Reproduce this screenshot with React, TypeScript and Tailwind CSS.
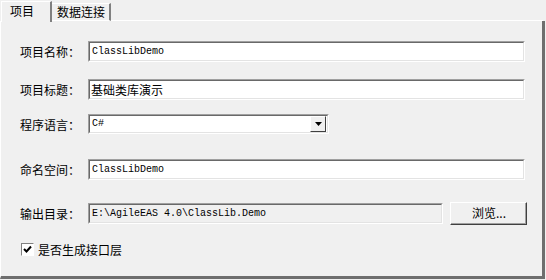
function Sunken({ className = "", children }: { className?: string; children?: React.ReactNode }) {
  return (
    <div className={`border border-t-[#a0a0a0] border-l-[#a0a0a0] border-r-white border-b-white ${className}`}>
      <div className="h-full w-full border border-t-[#696969] border-l-[#696969] border-r-[#e3e3e3] border-b-[#e3e3e3] flex items-center">
        {children}
      </div>
    </div>
  );
}

function Row({ label, className = "", children }: { label: string; className?: string; children: React.ReactNode }) {
  return (
    <div className={`flex items-center ${className}`}>
      <div className="w-[87px] pl-[19px] shrink-0 pt-[1px] whitespace-nowrap">{label}</div>
      {children}
    </div>
  );
}

function App() {
  const mono = "font-['Liberation_Mono','Noto_Sans_CJK_SC',monospace] text-[10px]";
  return (
    <div className="w-[546px] h-[280px] bg-[#f0f0f0] text-black text-[12px] leading-none font-['Noto_Sans_CJK_SC',sans-serif] flex flex-col">
      {/* tabs */}
      <div className="h-[21px] flex items-end relative">
        <div className="ml-[1px] h-[21px] w-[51px] border-t border-l border-white border-r-2 border-r-[#808080] bg-[#f0f0f0] flex items-start pl-[8px] pt-[3px] text-[12px] z-10 -mb-[1px]">
          项目
        </div>
        <div className="h-[18px] w-[59px] border-t border-white border-r-2 border-r-[#808080] border-b border-b-white flex items-start pl-[5px] pt-[2px]">
          数据连接
        </div>
        <div className="flex-1 h-[1px] bg-white mr-[3px]" />
      </div>
      {/* panel */}
      <div className="flex-1 border-l border-l-white border-r-[3px] border-r-[#6e6e6e] border-b-[3px] border-b-[#6e6e6e] mb-[1px] mr-[1px] flex flex-col">
        <Row label="项目名称：" className="mt-[20px]">
          <Sunken className="w-[437px] h-[21px] bg-white">
            <span className={`pl-[2px] ${mono}`}>ClassLibDemo</span>
          </Sunken>
        </Row>
        <Row label="项目标题：" className="mt-[17px]">
          <Sunken className="w-[437px] h-[21px] bg-white">
            <span className="pl-[1px] text-[12px]">基础类库演示</span>
          </Sunken>
        </Row>
        <Row label="程序语言：" className="mt-[14px]">
          <Sunken className="w-[241px] h-[20px] bg-white">
            <span className={`pl-[2px] flex-1 ${mono}`}>C#</span>
            <div className="w-[16px] h-[16px] mr-[1px] bg-[#f0f0f0] border border-t-white border-l-white border-r-[#404040] border-b-[#404040] flex items-center justify-center">
              <svg width="7" height="4" viewBox="0 0 7 4">
                <path d="M0 0H7L3.5 4Z" fill="#000" />
              </svg>
            </div>
          </Sunken>
        </Row>
        <Row label="命名空间：" className="mt-[25px]">
          <Sunken className="w-[437px] h-[21px] bg-white">
            <span className={`pl-[2px] ${mono}`}>ClassLibDemo</span>
          </Sunken>
        </Row>
        <Row label="输出目录：" className="mt-[22px]">
          <Sunken className="w-[355px] h-[21px] bg-[#f0f0f0]">
            <span className={`pl-[2px] ${mono}`}>E:\AgileEAS 4.0\ClassLib.Demo</span>
          </Sunken>
          <div className="ml-[7px] w-[77px] h-[23px] border border-t-white border-l-white border-r-[#404040] border-b-[#404040]">
            <div className="h-full w-full border-r border-b border-r-[#a0a0a0] border-b-[#a0a0a0] flex items-center justify-center pl-[2px]">
              浏览...
            </div>
          </div>
        </Row>
        <div className="flex items-center mt-[18px] pl-[20px]">
          <div className="w-[13px] h-[13px] border border-t-[#808080] border-l-[#808080] border-r-white border-b-white bg-white flex items-center justify-center">
            <svg width="9" height="9" viewBox="0 0 9 9">
              <path d="M1 4L3.5 6.5L8 1.5" stroke="#000" strokeWidth="2" fill="none" />
            </svg>
          </div>
          <span className="ml-[4px]">是否生成接口层</span>
        </div>
      </div>
    </div>
  );
}

export default App;
